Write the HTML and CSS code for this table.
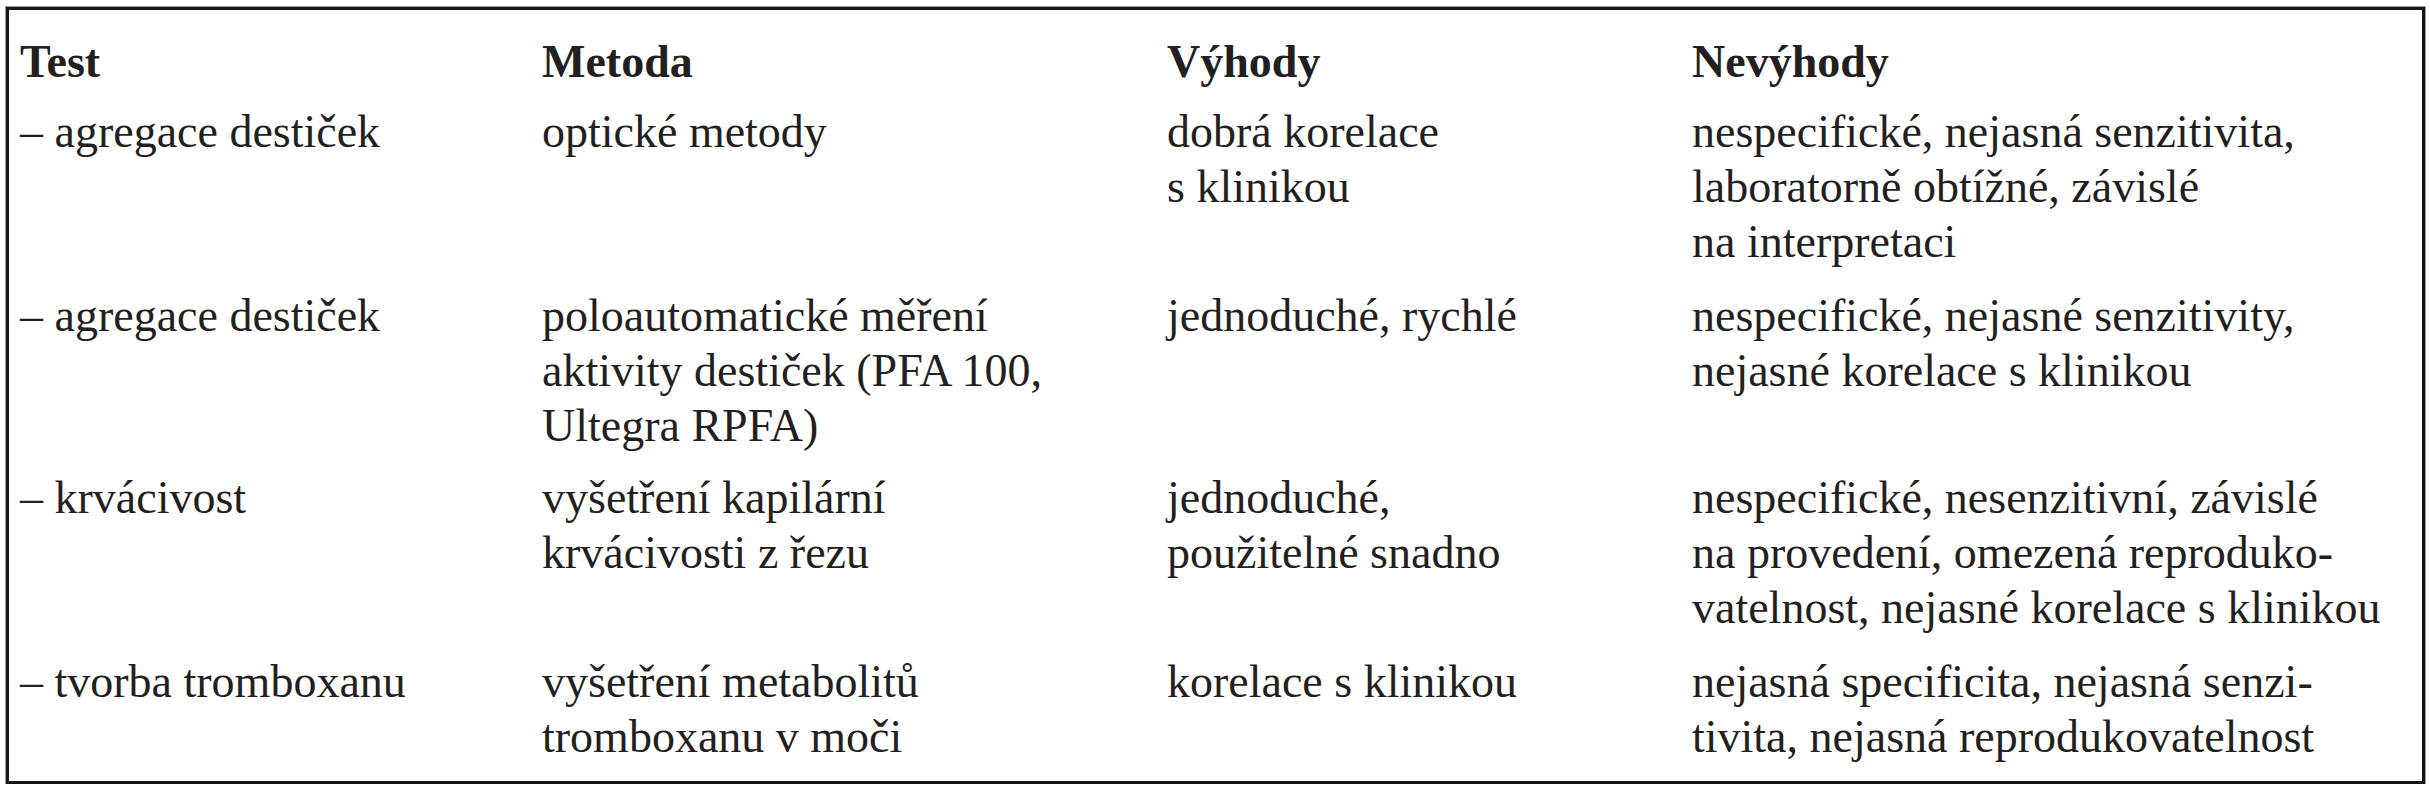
FILE: index.html
```html
<!DOCTYPE html>
<html lang="cs">
<head>
<meta charset="utf-8">
<title>Testy</title>
<link rel="stylesheet" href="styles.css">
</head>
<body>
<div class="frame">
  <div class="row head">
    <div class="cell">Test</div>
    <div class="cell">Metoda</div>
    <div class="cell">Výhody</div>
    <div class="cell">Nevýhody</div>
  </div>
  <div class="row r1">
    <div class="cell">– agregace destiček</div>
    <div class="cell">optické metody</div>
    <div class="cell">dobrá korelace<br>s klinikou</div>
    <div class="cell">nespecifické, nejasná senzitivita,<br>laboratorně obtížné, závislé<br>na interpretaci</div>
  </div>
  <div class="row r2">
    <div class="cell">– agregace destiček</div>
    <div class="cell">poloautomatické měření<br>aktivity destiček (PFA 100,<br>Ultegra RPFA)</div>
    <div class="cell">jednoduché, rychlé</div>
    <div class="cell">nespecifické, nejasné senzitivity,<br>nejasné korelace s klinikou</div>
  </div>
  <div class="row r3">
    <div class="cell">– krvácivost</div>
    <div class="cell">vyšetření kapilární<br>krvácivosti z řezu</div>
    <div class="cell">jednoduché,<br>použitelné snadno</div>
    <div class="cell">nespecifické, nesenzitivní, závislé<br>na provedení, omezená reproduko-<br>vatelnost, nejasné korelace s klinikou</div>
  </div>
  <div class="row r4">
    <div class="cell">– tvorba tromboxanu</div>
    <div class="cell">vyšetření metabolitů<br>tromboxanu v moči</div>
    <div class="cell">korelace s klinikou</div>
    <div class="cell">nejasná specificita, nejasná senzi-<br>tivita, nejasná reprodukovatelnost</div>
  </div>
</div>
</body>
</html>
```

FILE: styles.css
```css
html, body {
  margin: 0;
  padding: 0;
  background: #ffffff;
}

body {
  padding: 7px 5px 0 6px;
  font-family: "Liberation Serif", "Times New Roman", serif;
  font-size: 46px;
  line-height: 55px;
  color: #231f20;
}

.frame {
  width: 2402px;
  height: 747px;
  border: 3px solid #161616;
  box-shadow: 0 0 0 1px #9a9a9a;
  padding: 24px 0 0 11px;
  display: flex;
  flex-direction: column;
}

.row {
  display: grid;
  grid-template-columns: 522px 625px 525px 1fr;
}

.cell {
  white-space: nowrap;
}

.head .cell {
  font-weight: bold;
}

.r1 { margin-top: 15px; }
.r2 { margin-top: 19px; }
.r3 { margin-top: 17px; }
.r4 { margin-top: 19px; }
```
